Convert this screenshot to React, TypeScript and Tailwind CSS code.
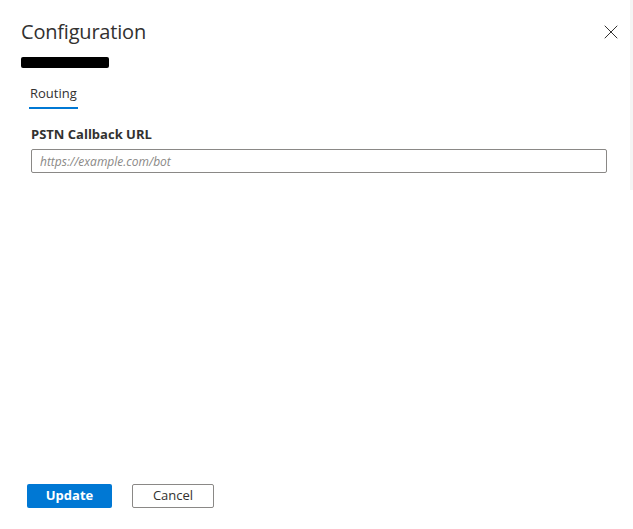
import { X } from "lucide-react";

export default function App() {
  return (
    <div className="flex h-[529px] w-[633px] bg-white font-['Open_Sans',sans-serif] text-[#323130]">
      <div className="flex flex-1 flex-col">
        {/* Header */}
        <div className="flex items-start justify-between pl-[21px] pr-[7px] pt-[18px]">
          <h1 className="text-[20px] font-medium leading-[27px] tracking-[-0.2px]">
            Configuration
          </h1>
          <button className="mt-[2px] text-[#323130]">
            <X className="h-[24px] w-[24px]" strokeWidth={1} />
          </button>
        </div>
        <div className="ml-[21px] mt-[12px] h-[11px] w-[88px] rounded-[2px] bg-black" />

        {/* Tabs */}
        <div className="ml-[29px] mt-[16px] flex">
          <div className="flex flex-col">
            <span className="px-[1px] text-[13px] leading-[19px]">Routing</span>
            <div className="mt-[4px] h-[2px] w-[49px] bg-[#0078d4]" />
          </div>
        </div>

        {/* Form */}
        <div className="ml-[31px] mr-[23px] mt-[16px] flex flex-col">
          <label className="text-[13px] font-bold leading-[19px]">PSTN Callback URL</label>
          <input
            className="mt-[5px] h-[24px] w-full rounded-[2px] border border-[#8a8886] px-[8px] text-[12px] italic outline-none placeholder:text-[#8a8886]"
            placeholder="https://example.com/bot"
          />
        </div>

        <div className="flex-1" />

        {/* Footer */}
        <div className="mb-[21px] ml-[27px] flex gap-[20px]">
          <button className="h-[24px] w-[85px] rounded-[2px] bg-[#0078d4] text-[13px] font-bold text-white">
            Update
          </button>
          <button className="h-[24px] w-[82px] rounded-[2px] border border-[#8a8886] bg-white text-[13px] text-[#323130]">
            Cancel
          </button>
        </div>
      </div>
      <div className="h-[190px] w-[3px] bg-[#f5f5f5]" />
    </div>
  );
}
